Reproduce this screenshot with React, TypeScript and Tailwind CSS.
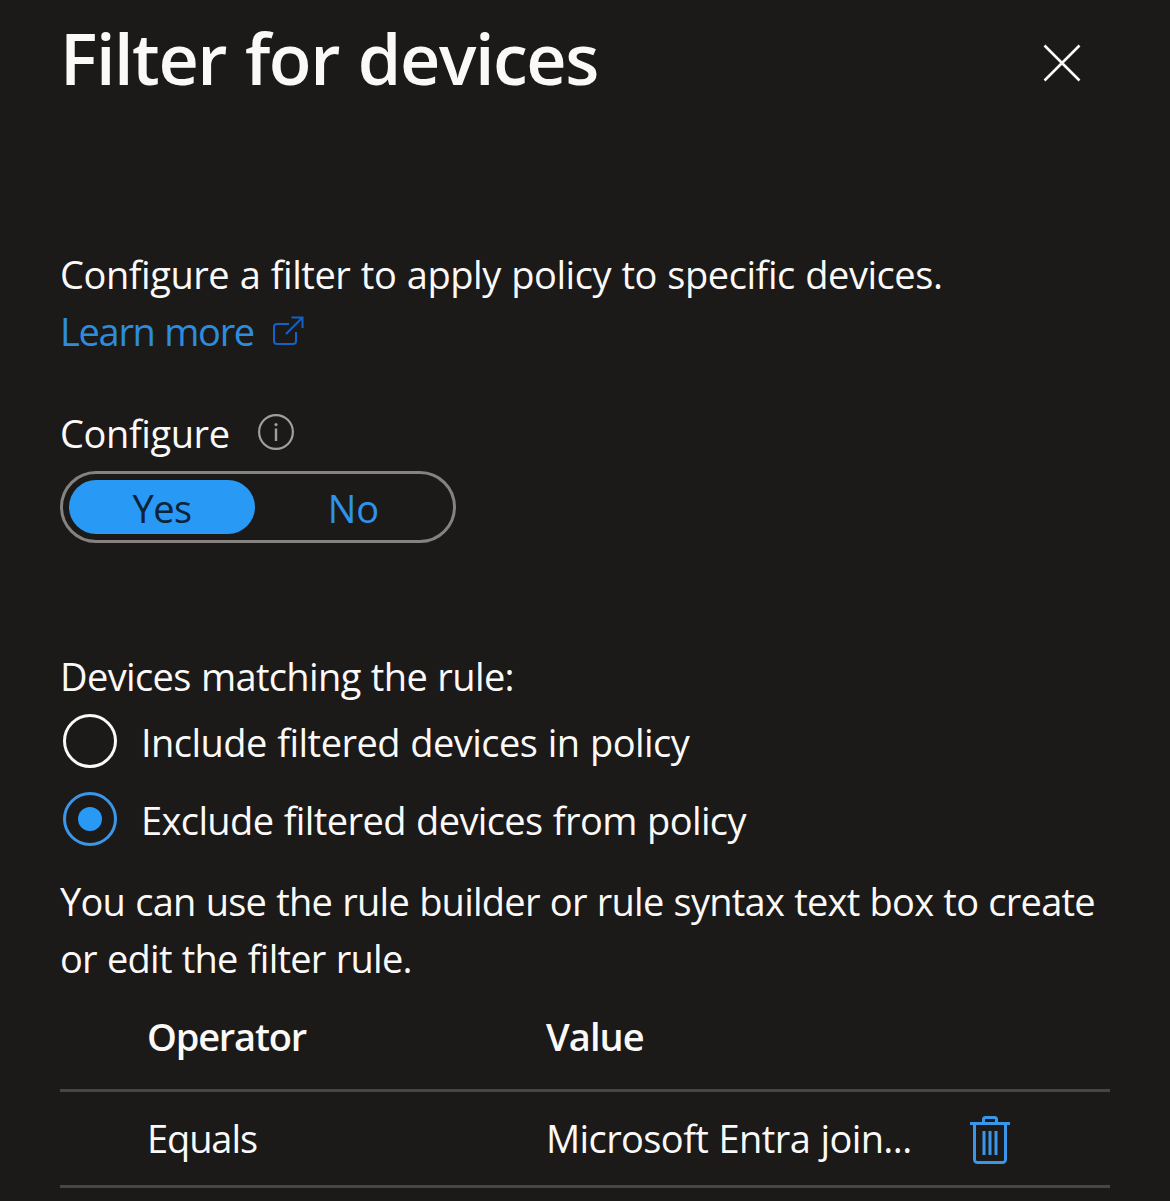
import type { ReactNode } from 'react'

interface RadioRowProps {
  checked?: boolean
  children: ReactNode
}

function RadioRow({ checked, children }: RadioRowProps) {
  return (
    <label className="ml-[3px] flex h-[54px] items-center">
      <span
        className={
          checked
            ? 'flex size-[54px] shrink-0 items-center justify-center rounded-full border-3 border-[#3a96e8]'
            : 'flex size-[54px] shrink-0 items-center justify-center rounded-full border-3 border-[#faf9f8]'
        }
      >
        {checked && <span className="size-6 rounded-full bg-[#2899f5]" />}
      </span>
      <span className={checked ? 'ml-6 pt-0.5 tracking-[-0.61px]' : 'ml-6 pt-0.5 tracking-[-0.53px]'}>{children}</span>
    </label>
  )
}

function ExternalLinkIcon() {
  return (
    <svg className="mb-0.5" width="32" height="30" viewBox="0 0 32 30" fill="none" stroke="#1661c4" strokeWidth="2">
      <path d="M17 8H5a3 3 0 0 0-3 3v14a3 3 0 0 0 3 3h16a3 3 0 0 0 3-3v-9" />
      <path d="M14 18 30 2M19.5 1.5H30.5V12" />
    </svg>
  )
}

function InfoIcon() {
  return (
    <svg className="mb-1" width="36" height="36" viewBox="0 0 36 36" fill="none" stroke="#a19f9d" strokeWidth="2.2">
      <circle cx="18" cy="18" r="16.9" />
      <path d="M18 14.5V27" strokeWidth="2.4" />
      <circle cx="18" cy="10.6" r="1.6" fill="#a19f9d" stroke="none" />
    </svg>
  )
}

function TrashIcon() {
  return (
    <svg className="mt-0.5" width="40" height="48" viewBox="0 0 40 48" fill="none" stroke="#3a96e8" strokeWidth="3">
      <path d="M0 7.5H40" />
      <path d="M13.5 7V3.5a2 2 0 0 1 2-2h9a2 2 0 0 1 2 2V7" />
      <path d="M4.5 8v35.5a3 3 0 0 0 3 3h25a3 3 0 0 0 3-3V8" />
      <path d="M14 15v24M20 15v24M26 15v24" />
    </svg>
  )
}

export default function App() {
  return (
    <div className="h-[1201px] w-[1170px] overflow-hidden bg-[#1b1a19] px-[60px] font-['Open_Sans','Noto_Sans',sans-serif] text-[38px] leading-[57px] tracking-[-0.6px] [word-spacing:1px] whitespace-nowrap text-[#faf9f8]">
      {/* Header */}
      <div className="flex h-[246px] items-start justify-between">
        <h2 className="mt-[10px] text-[70px] leading-[96px] font-semibold tracking-[-1.4px] [word-spacing:2px]">
          Filter for devices
        </h2>
        <button className="mt-11 mr-[29px]">
          <svg width="38" height="38" viewBox="0 0 38 38" stroke="#faf9f8" strokeWidth="2.6">
            <path d="M1.5 1.5 36.5 36.5M36.5 1.5 1.5 36.5" />
          </svg>
        </button>
      </div>

      <p className="tracking-[-0.45px]">Configure a filter to apply policy to specific devices.</p>
      <a className="flex items-center text-[#2e8cdf]">
        <span className="mr-[18px] tracking-[-1.3px]">Learn more</span>
        <ExternalLinkIcon />
      </a>

      {/* Configure toggle */}
      <div className="mt-[45px] flex items-center">
        <span className="mr-7 tracking-[-0.4px]">Configure</span>
        <InfoIcon />
      </div>
      <div className="mt-[9px] flex h-[72px] w-[396px] rounded-full border-3 border-[#85827f] p-1.5">
        <button className="flex w-[186px] items-center justify-center rounded-full bg-[#2899f5] pt-0.5 text-[#0f2338]">
          Yes
        </button>
        <button className="flex flex-1 items-center justify-center pt-0.5 pl-[5px] tracking-normal text-[#2e93ea]">
          No
        </button>
      </div>

      {/* Rule mode */}
      <p className="mt-[105px] tracking-[-0.64px]">Devices matching the rule:</p>
      <div className="mt-[9px] flex flex-col gap-6">
        <RadioRow>Include filtered devices in policy</RadioRow>
        <RadioRow checked>Exclude filtered devices from policy</RadioRow>
      </div>
      <p className="mt-[27px] tracking-[-0.76px]">
        You can use the rule builder or rule syntax text box to create
        <br />
        or edit the filter rule.
      </p>

      {/* Rule table */}
      <div className="mt-[21px] flex h-[84px] border-b-3 border-[#484644] pl-[87px] font-semibold">
        <span className="w-[399px] tracking-[-1.2px]">Operator</span>
        <span className="tracking-[-0.9px]">Value</span>
      </div>
      <div className="flex h-24 items-center border-b-3 border-[#484644] pl-[87px]">
        <span className="w-[399px] tracking-[-1.1px]">Equals</span>
        <span className="w-[424px]">Microsoft Entra join...</span>
        <TrashIcon />
      </div>
    </div>
  )
}
